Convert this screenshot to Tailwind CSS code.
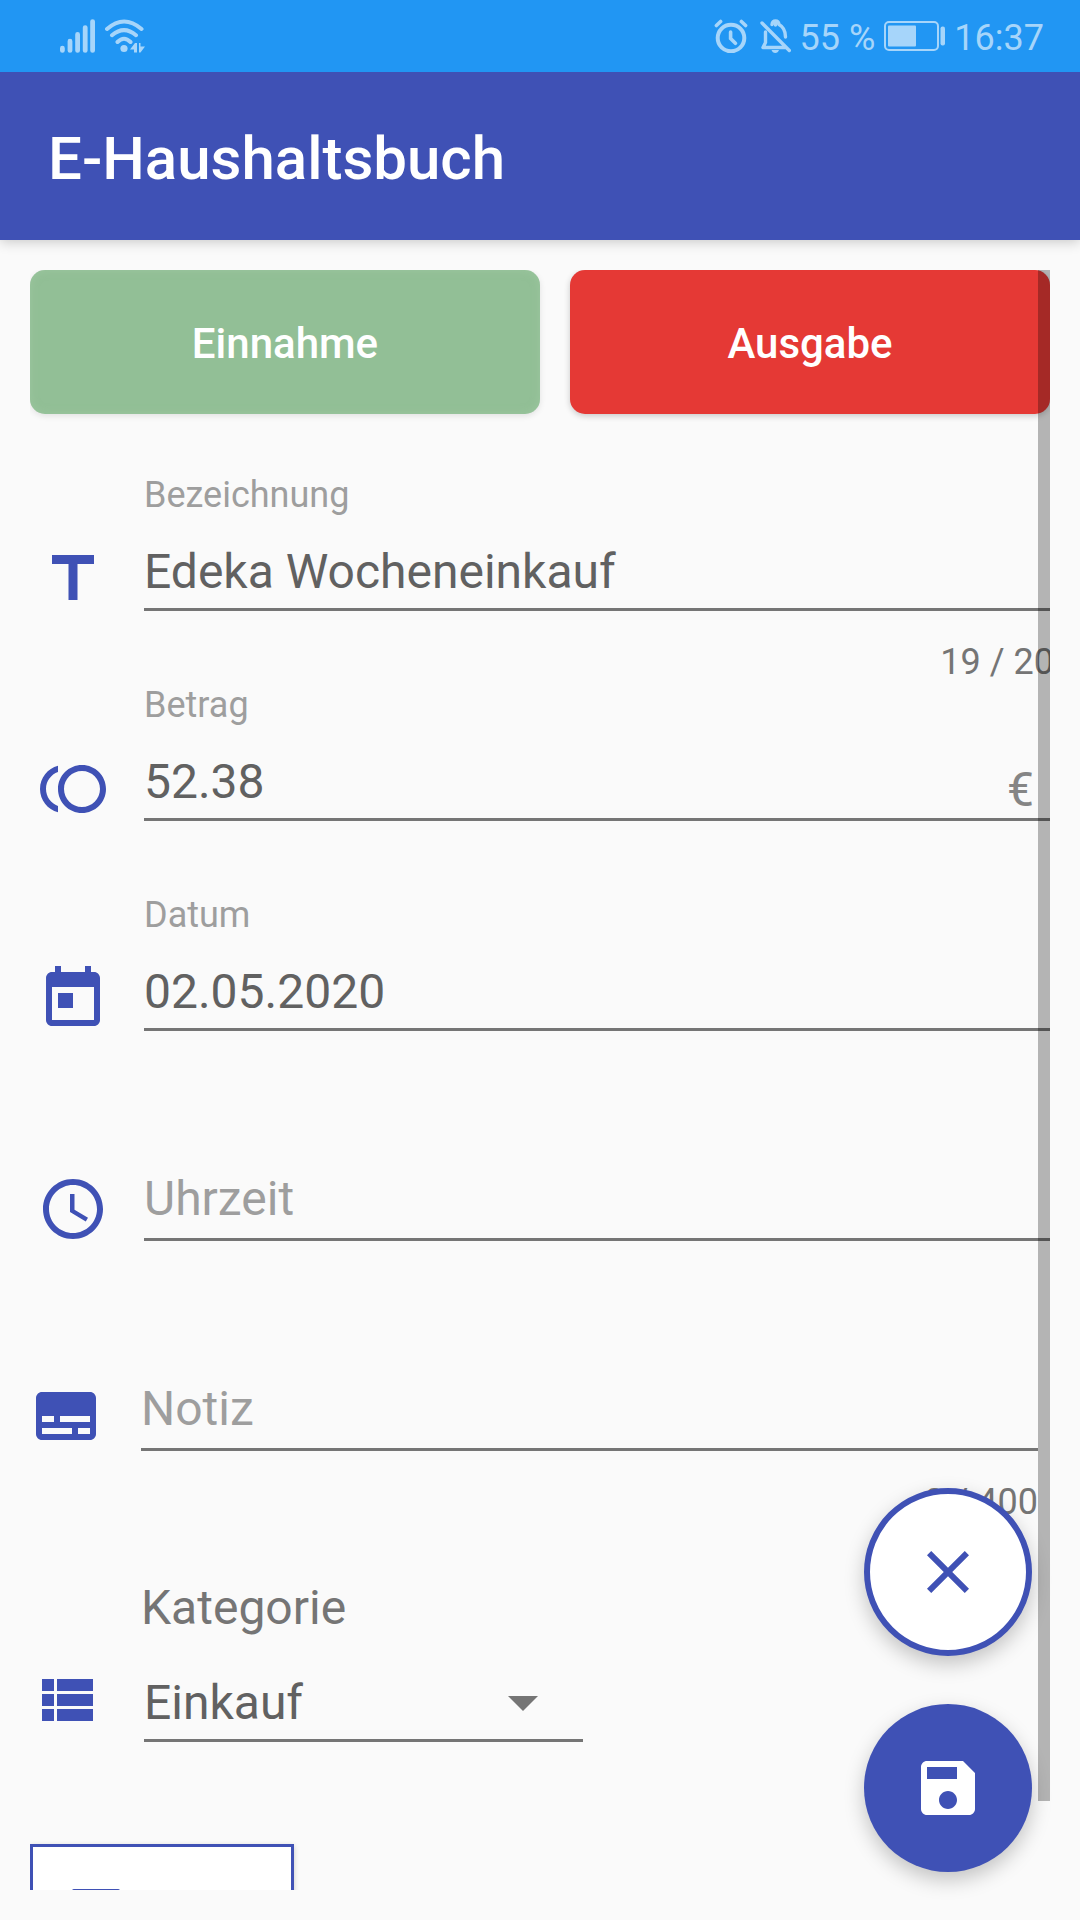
<!DOCTYPE html>
<html lang="de">
<head>
<meta charset="utf-8">
<meta name="viewport" content="width=device-width, initial-scale=1">
<title>E-Haushaltsbuch</title>
<script src="https://cdn.jsdelivr.net/npm/@tailwindcss/browser@4"></script>
</head>
<body class="relative flex h-screen flex-col overflow-hidden bg-[#fafafa] font-['Roboto',sans-serif] text-[#616161]">

  <!-- System status bar -->
  <div class="relative z-10 flex h-[72px] shrink-0 items-center justify-between bg-[#2196f3] pr-9 pl-[60px] text-4xl leading-[42px] text-[#a6d5fa]">
    <div class="flex items-center gap-[10px]">
      <svg class="h-[34px] w-[35px]" viewBox="0 0 35 34" stroke="currentColor" stroke-width="4.8" stroke-linecap="round" aria-label="Mobilfunk">
        <path d="M2.4 29.2v2.2M10 22.2v9.2M17.6 15.4v16M25.2 8.6v22.800M32.600 2.600v28.800"/>
      </svg>
      <svg class="h-[34px] w-[40px]" viewBox="0 0 40 34" fill="none" stroke="currentColor" stroke-width="4" stroke-linecap="round" aria-label="WLAN">
        <path d="M2 10Q19-5 36.500 10M7 16.200Q19 6 31 16.200M12.500 23Q19 16.500 25.500 23"/>
        <circle cx="19" cy="29.500" r="3.600" fill="currentColor" stroke="none"/>
        <path fill="currentColor" stroke="none" d="M25 30.500l5-6.500h2v9.500h-3v-3zM34 24h1.500v3.500H40l-4.500 6H34z"/>
      </svg>
    </div>
    <div class="flex items-center gap-3">
      <svg class="size-[34px]" viewBox="0 0 34 34" fill="none" stroke="currentColor" stroke-width="4" stroke-linecap="round" aria-label="Wecker">
        <circle cx="17" cy="19" r="13.300"/>
        <path d="M2.400 6.500l4.200-4M31.600 6.500l-4.200-4M16.600 13v6.500l4.800 4.800" stroke-width="3.600"/>
      </svg>
      <div class="flex items-center gap-[9px]">
        <svg class="h-[34px] w-[31px]" viewBox="0 0 31 34" fill="none" stroke="currentColor" stroke-width="3.400" stroke-linecap="round" stroke-linejoin="round" aria-label="Stumm">
          <path d="M5.500 13v10.500L3 28.500H25M12 5.500Q12.500 2 15.500 2T19 5.500Q25.500 9 25.500 18M2 4l27.300 27.500M15.500 3v3"/>
          <path d="M11.500 31h7.500q-1 3-3.750 3t-3.750-3z" fill="currentColor" stroke="none"/>
        </svg>
        <span class="pt-1">55 %</span>
        <svg class="h-[30px] w-[61px]" viewBox="0 0 61 30" fill="none" aria-label="Akku">
          <rect x="1" y="1" width="53" height="28" rx="4" stroke="currentColor" stroke-width="2"/>
          <rect x="4" y="4.500" width="28" height="21" rx="1" fill="currentColor"/>
          <rect x="56.500" y="5.500" width="4.500" height="19" rx="2" fill="currentColor"/>
        </svg>
        <span class="pt-1">16:37</span>
      </div>
    </div>
  </div>

  <header class="flex h-[168px] shrink-0 items-center bg-[#3f51b5] px-12 shadow-[0_2px_12px_rgba(0,0,0,0.2)]">
    <h1 class="pt-1.5 text-6xl leading-[72px] font-medium text-white">E-Haushaltsbuch</h1>
  </header>

  <main class="relative m-[30px] min-h-0 flex-1 overflow-hidden">
    <form class="flex flex-col">
      <div class="flex gap-[30px] text-[42px] leading-[48px] font-medium text-white">
        <button type="button" class="h-36 w-1/2 rounded-[15px] bg-[#92bf96] pt-1 shadow-[0_2px_6px_rgba(0,0,0,0.1),inset_0_0_8px_rgba(165,208,168,0.5)]">Einnahme</button>
        <button type="button" class="h-36 flex-1 rounded-[15px] bg-[#e53935] pt-1 shadow-[0_2px_6px_rgba(0,0,0,0.2)]">Ausgabe</button>
      </div>

      <div class="-mr-2 flex flex-col pt-[60px]">
        <div class="flex h-[210px] gap-[35px] pl-[7px]">
          <svg class="mt-[69px] size-[72px] shrink-0 fill-[#3f51b5]" viewBox="0 0 24 24" aria-hidden="true"><path d="M5 4v3h5.500v12h3V7H19V4z"/></svg>
          <div class="flex min-w-0 flex-1 flex-col">
            <label for="title" class="text-4xl leading-[42px] text-[#9e9e9e]">Bezeichnung</label>
            <input id="title" type="text" value="Edeka Wocheneinkauf" class="mt-7 h-[67px] w-full border-b-3 border-[#757575] bg-transparent pb-[10px] text-5xl leading-[56px] outline-none">
            <span class="mt-[30px] pr-1 text-right text-4xl leading-[42px] text-[#757575]">19 / 20</span>
          </div>
        </div>

        <div class="flex h-[210px] gap-[35px] pl-[7px]">
          <svg class="mt-[69px] size-[72px] shrink-0 fill-[#3f51b5]" viewBox="0 0 24 24" aria-hidden="true"><path d="M15 4c-4.420 0-8 3.580-8 8s3.580 8 8 8 8-3.580 8-8-3.580-8-8-8zm0 14c-3.310 0-6-2.690-6-6s2.690-6 6-6 6 2.690 6 6-2.690 6-6 6zM3 12c0-2.610 1.670-4.830 4-5.650V4.260C3.550 5.150 1 8.270 1 12s2.550 6.850 6 7.740v-2.090c-2.330-.82-4-3.040-4-5.650z"/></svg>
          <div class="flex min-w-0 flex-1 flex-col">
            <label for="amount" class="text-4xl leading-[42px] text-[#9e9e9e]">Betrag</label>
            <div class="mt-7 flex h-[67px] items-end border-b-3 border-[#757575]">
              <input id="amount" type="text" inputmode="decimal" value="52.38" class="h-16 min-w-0 flex-1 bg-transparent pb-[10px] text-5xl leading-[56px] outline-none">
              <span class="mr-6 text-5xl leading-[56px] text-[#858585]">€</span>
            </div>
          </div>
        </div>

        <div class="flex h-[210px] gap-[35px] pl-[7px]">
          <svg class="mt-[69px] size-[72px] shrink-0 fill-[#3f51b5]" viewBox="0 0 24 24" aria-hidden="true"><path d="M19 3h-1V1h-2v2H8V1H6v2H5c-1.110 0-1.990.9-1.990 2L3 19c0 1.100.89 2 2 2h14c1.100 0 2-.9 2-2V5c0-1.100-.9-2-2-2zm0 16H5V8h14v11zM7 10h5v5H7z"/></svg>
          <div class="flex min-w-0 flex-1 flex-col">
            <label for="date" class="text-4xl leading-[42px] text-[#9e9e9e]">Datum</label>
            <input id="date" type="text" value="02.05.2020" class="mt-7 h-[67px] w-full border-b-3 border-[#757575] bg-transparent pb-[10px] text-5xl leading-[56px] outline-none">
          </div>
        </div>

        <div class="flex h-[210px] gap-[35px] pl-[7px]">
          <svg class="mt-[69px] size-[72px] shrink-0 fill-[#3f51b5]" viewBox="0 0 24 24" aria-hidden="true"><path d="M11.990 2C6.470 2 2 6.480 2 12s4.470 10 9.990 10C17.520 22 22 17.520 22 12S17.520 2 11.990 2zM12 20c-4.420 0-8-3.580-8-8s3.580-8 8-8 8 3.580 8 8-3.580 8-8 8zm.5-13H11v6l5.250 3.150.75-1.230-4.500-2.670z"/></svg>
          <div class="flex min-w-0 flex-1 flex-col pt-[67px]">
            <input type="text" placeholder="Uhrzeit" aria-label="Uhrzeit" class="h-[70px] w-full border-b-3 border-[#757575] bg-transparent pb-[13px] text-5xl leading-[56px] outline-none placeholder:text-[#9e9e9e]">
          </div>
        </div>
      </div>

      <div class="flex h-[210px] gap-[39px] pr-3">
        <svg class="mt-[66px] size-[72px] shrink-0 fill-[#3f51b5]" viewBox="0 0 24 24" aria-hidden="true"><path d="M20 4H4c-1.100 0-2 .9-2 2v12c0 1.100.9 2 2 2h16c1.100 0 2-.9 2-2V6c0-1.100-.9-2-2-2zM4 12h4v2H4v-2zm10 6H4v-2h10v2zm6 0h-4v-2h4v2zm0-4H10v-2h10v2z"/></svg>
        <div class="flex min-w-0 flex-1 flex-col pt-[67px]">
          <input type="text" placeholder="Notiz" aria-label="Notiz" class="h-[70px] w-full border-b-3 border-[#757575] bg-transparent pb-[13px] text-5xl leading-[56px] outline-none placeholder:text-[#9e9e9e]">
          <span class="mt-[30px] text-right text-4xl leading-[42px] text-[#757575]">0 / 400</span>
        </div>
      </div>

      <div class="flex gap-[39px] pt-14">
        <svg class="mt-[84px] size-[72px] shrink-0 fill-[#3f51b5]" viewBox="0 0 24 24" aria-hidden="true"><path d="M4 14h4v-4H4v4zm0 5h4v-4H4v4zM4 9h4V5H4v4zm5 5h12v-4H9v4zm0 5h12v-4H9v4zM9 5v4h12V5H9z"/></svg>
        <div class="flex flex-col gap-[39px]">
          <label for="category" class="text-5xl leading-[56px] text-[#757575]">Kategorie</label>
          <div class="ml-[3px] flex w-[439px] items-center border-b-3 border-[#757575] pr-[45px]">
            <select id="category" class="h-16 min-w-0 flex-1 appearance-none bg-transparent pb-2 text-5xl leading-[56px] outline-none">
              <option>Einkauf</option>
            </select>
            <svg class="mb-2 h-[15px] w-[30px] fill-[#757575]" viewBox="0 0 30 15" aria-hidden="true"><path d="M0 0h30L15 15z"/></svg>
          </div>
        </div>
      </div>

      <button type="button" aria-label="Bild hinzufügen" class="mt-[102px] flex h-36 w-[264px] items-start border-3 border-[#3f51b5] bg-white pt-[42px] pl-[39px] shadow-[0_2px_6px_rgba(0,0,0,0.2)]">
        <svg class="size-12 fill-[#3f51b5]" viewBox="0 0 48 48" aria-hidden="true"><path d="M2 0h44q2 0 2 2v44q0 2-2 2H2q-2 0-2-2V2Q0 0 2 0z"/></svg>
      </button>
    </form>

    <!-- Scroll indicator -->
    <div class="absolute top-0 right-0 bottom-[89px] w-3 bg-black/28"></div>
  </main>

  <!-- Floating actions -->
  <div class="absolute right-12 bottom-12 flex flex-col gap-12">
    <button type="button" aria-label="Abbrechen" class="flex size-[168px] items-center justify-center rounded-full border-6 border-[#3f51b5] bg-white shadow-[0_8px_20px_rgba(0,0,0,0.22)]">
      <svg class="size-[72px] fill-[#3f51b5]" viewBox="0 0 24 24" aria-hidden="true"><path d="M19 6.410 17.590 5 12 10.590 6.410 5 5 6.410 10.590 12 5 17.590 6.410 19 12 13.410 17.590 19 19 17.590 13.410 12z"/></svg>
    </button>
    <button type="button" aria-label="Speichern" class="flex size-[168px] items-center justify-center rounded-full bg-[#3f51b5] shadow-[0_8px_20px_rgba(0,0,0,0.22)]">
      <svg class="size-[72px] fill-white" viewBox="0 0 24 24" aria-hidden="true"><path d="M17 3H5c-1.110 0-2 .9-2 2v14c0 1.100.89 2 2 2h14c1.100 0 2-.9 2-2V7l-4-4zm-5 16c-1.660 0-3-1.340-3-3s1.340-3 3-3 3 1.340 3 3-1.340 3-3 3zm3-10H5V5h10v4z"/></svg>
    </button>
  </div>
</body>
</html>
